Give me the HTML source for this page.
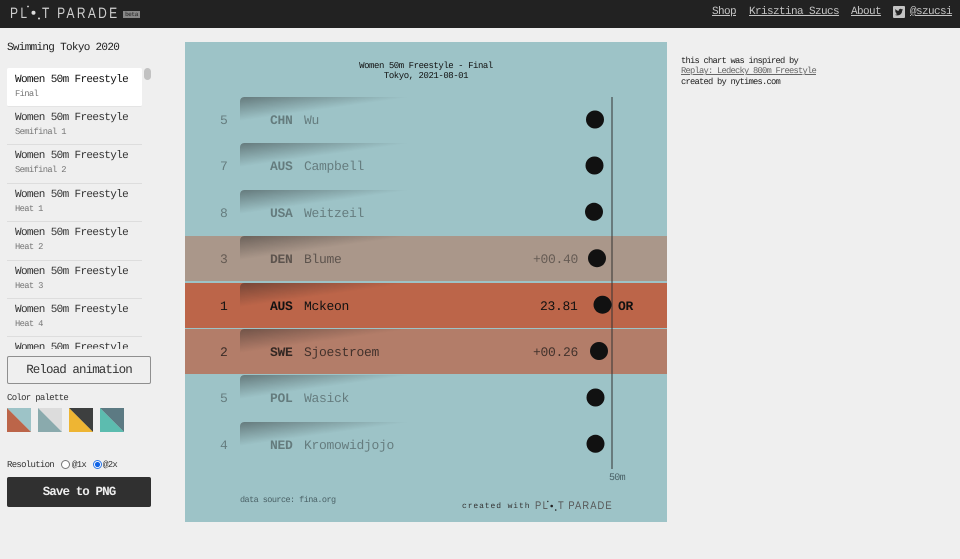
<!DOCTYPE html>
<html><head><meta charset="utf-8">
<style>
html,body{margin:0;padding:0;width:960px;height:559px;overflow:hidden;background:#efefef;font-family:"Liberation Mono",monospace;color:#222;text-rendering:geometricPrecision}
.a{position:absolute;white-space:pre;line-height:1}
#hdr{position:absolute;left:0;top:0;width:960px;height:28px;background:#222}
.nav{color:#c4c4c4;font-size:11px;text-decoration:underline;top:7px;letter-spacing:-.6px}
.logo{font-family:"Liberation Sans",sans-serif;color:#d0d0d0;font-size:15px;letter-spacing:2.9px;top:6px;transform:scaleX(.8);transform-origin:0 0}
.it{position:absolute;left:7px;width:135px;height:38px;border-bottom:1px solid #ddd}
.it b{position:absolute;left:8px;top:5.5px;font-weight:normal;font-size:11px;color:#333;letter-spacing:-.65px;white-space:pre;line-height:12px}
.it i{position:absolute;left:8px;top:20.5px;font-style:normal;font-size:8.8px;color:#777;letter-spacing:-.65px;white-space:pre;line-height:10px}
.r{font-size:13px;letter-spacing:-.3px;color:#111}
.c{font-weight:bold}
.w{position:absolute;left:240px;width:170px;height:24px;-webkit-mask-image:linear-gradient(to right,#000,transparent);mask-image:linear-gradient(to right,#000,transparent);border-top-left-radius:4px;background:conic-gradient(from 262deg at 170px 0,rgba(34,34,34,0) 0deg,rgba(34,34,34,.45) 8deg,rgba(34,34,34,0) 8deg)}
.s{font-size:9px;color:#333;letter-spacing:-.7px}
</style></head><body>
<div id="hdr"></div>
<div class="a logo" style="left:10px">PL</div>
<div class="a logo" style="left:42px">T PARADE</div>
<svg class="a" style="left:0;top:0" width="150" height="28"><circle cx="28" cy="6.500" r=".9" fill="#ddd"/><circle cx="33.500" cy="12.700" r="2" fill="#ddd"/><circle cx="39" cy="18.500" r="1" fill="#ddd"/></svg>
<div class="a" style="left:123px;top:11px;width:17px;height:7px;background:#888;color:#222;font-size:6px;line-height:7px;text-align:center;letter-spacing:-.4px">beta</div>
<div class="a nav" style="left:712px">Shop</div>
<div class="a nav" style="left:749px">Krisztina Szucs</div>
<div class="a nav" style="left:851px">About</div>
<svg class="a" style="left:893px;top:6px" width="12" height="12" viewBox="0 0 12 12"><rect width="12" height="12" rx="1" fill="#c4c4c4"/><path d="M10 3.6c-.3.1-.6.2-1 .2.4-.2.6-.5.8-.9-.3.2-.7.3-1.100.4a1.700 1.700 0 0 0-2.900 1.500C4.400 4.800 3.200 4.100 2.400 3.100c-.4.800-.2 1.700.5 2.200-.3 0-.5-.1-.7-.2 0 .8.600 1.500 1.300 1.700-.2.100-.5.100-.7 0 .2.700.9 1.100 1.600 1.200-.7.500-1.500.8-2.400.7.800.5 1.600.7 2.500.7 3 0 4.700-2.500 4.600-4.800.3-.2.600-.5.9-.6z" fill="#222"/></svg>
<div class="a nav" style="left:910px">@szucsi</div>

<div class="a" style="left:7px;top:43px;font-size:11px;letter-spacing:-.7px;color:#222">Swimming Tokyo 2020</div>

<div style="position:absolute;left:0;top:68px;width:152px;height:281px;overflow:hidden">
<div class="it" style="top:0;background:#fff;border-radius:2px;border-bottom:1px solid #e4e4e4"><b style="color:#111">Women 50m Freestyle</b><i>Final</i></div>
<div class="it" style="top:38.400px"><b>Women 50m Freestyle</b><i>Semifinal 1</i></div>
<div class="it" style="top:76.800px"><b>Women 50m Freestyle</b><i>Semifinal 2</i></div>
<div class="it" style="top:115.200px"><b>Women 50m Freestyle</b><i>Heat 1</i></div>
<div class="it" style="top:153.600px"><b>Women 50m Freestyle</b><i>Heat 2</i></div>
<div class="it" style="top:192px"><b>Women 50m Freestyle</b><i>Heat 3</i></div>
<div class="it" style="top:230.400px"><b>Women 50m Freestyle</b><i>Heat 4</i></div>
<div class="it" style="top:268.800px"><b>Women 50m Freestyle</b></div>
<div style="position:absolute;left:144px;top:0;width:7px;height:12px;border-radius:4px;background:#c2c2c2"></div>
</div>

<div class="a" style="left:7px;top:356px;width:142px;height:26px;border:1px solid #8f8f8f;border-radius:2px;text-align:center;line-height:26px;font-size:12.500px;letter-spacing:-.9px;color:#333">Reload animation</div>
<div class="a s" style="left:7px;top:394px">Color palette</div>
<svg class="a" style="left:7px;top:408px" width="120" height="25">
<polygon points="0,0 24,0 24,24" fill="#9dc3c7"/><polygon points="0,0 24,24 0,24" fill="#bc6549"/>
<polygon points="31,0 55,0 55,24" fill="#dcdcdc"/><polygon points="31,0 55,24 31,24" fill="#8aaaad"/>
<polygon points="62,0 86,0 86,24" fill="#3d3f3f"/><polygon points="62,0 86,24 62,24" fill="#eeb533"/>
<polygon points="93,0 117,0 117,24" fill="#5c7a83"/><polygon points="93,0 117,24 93,24" fill="#5cbcaf"/>
</svg>
<div class="a s" style="left:7px;top:461px">Resolution</div>
<svg class="a" style="left:60px;top:458px" width="50" height="14"><circle cx="5.500" cy="6.500" r="4" fill="#fff" stroke="#777" stroke-width="1"/><circle cx="37.500" cy="6.500" r="4" fill="#fff" stroke="#2a76e8" stroke-width="1"/><circle cx="37.500" cy="6.500" r="2.600" fill="#0f62e6"/></svg>
<div class="a s" style="left:72px;top:461px">@1x</div>
<div class="a s" style="left:103px;top:461px">@2x</div>
<div class="a" style="left:7px;top:477px;width:144px;height:30px;background:#303030;border-radius:2px;text-align:center;line-height:30px;font-size:12.500px;letter-spacing:-.9px;color:#eee;font-weight:bold">Save to PNG</div>

<div style="position:absolute;left:185px;top:42px;width:482px;height:480px;background:#9dc3c7"></div>
<div class="a" style="left:185px;top:236px;width:482px;height:45px;background:#aa978a"></div>
<div class="a" style="left:185px;top:282.500px;width:482px;height:45px;background:#bc6549"></div>
<div class="a" style="left:185px;top:329px;width:482px;height:45px;background:#b37d69"></div>

<div class="w" style="top:97px"></div>
<div class="w" style="top:143.400px"></div>
<div class="w" style="top:189.800px"></div>
<div class="w" style="top:236.200px"></div>
<div class="w" style="top:282.600px"></div>
<div class="w" style="top:329px"></div>
<div class="w" style="top:375.400px"></div>
<div class="w" style="top:421.800px"></div>

<svg class="a" style="left:185px;top:42px" width="482" height="480">
<g fill="#111"><circle cx="410" cy="77.500" r="9"/><circle cx="409.500" cy="123.500" r="9"/><circle cx="409" cy="169.800" r="9"/><circle cx="412" cy="216.200" r="9"/><circle cx="417.500" cy="262.700" r="9"/><circle cx="414" cy="309" r="9"/><circle cx="410.500" cy="355.500" r="9"/><circle cx="410.500" cy="401.800" r="9"/></g>
<rect x="426.500" y="55" width="1" height="372" fill="#333"/>
</svg>

<div class="a" style="left:185px;top:61px;width:482px;text-align:center;font-size:9px;line-height:10.300px;color:#111;letter-spacing:-.45px">Women 50m Freestyle - Final<br>Tokyo, 2021-08-01</div>

<!-- rows -->
<div class="a r" style="left:220px;top:114px;opacity:.4">5</div><div class="a r c" style="left:270px;top:114px;opacity:.4">CHN</div><div class="a r" style="left:304px;top:114px;opacity:.4">Wu</div>
<div class="a r" style="left:220px;top:160px;opacity:.4">7</div><div class="a r c" style="left:270px;top:160px;opacity:.4">AUS</div><div class="a r" style="left:304px;top:160px;opacity:.4">Campbell</div>
<div class="a r" style="left:220px;top:207px;opacity:.4">8</div><div class="a r c" style="left:270px;top:207px;opacity:.4">USA</div><div class="a r" style="left:304px;top:207px;opacity:.4">Weitzeil</div>
<div class="a r" style="left:220px;top:253px;opacity:.45">3</div><div class="a r c" style="left:270px;top:253px;opacity:.5">DEN</div><div class="a r" style="left:304px;top:253px;opacity:.5">Blume</div><div class="a r" style="left:533px;top:253px;opacity:.45">+00.40</div>
<div class="a r" style="left:220px;top:300px">1</div><div class="a r c" style="left:270px;top:300px">AUS</div><div class="a r" style="left:304px;top:300px">Mckeon</div><div class="a r" style="left:540px;top:300px">23.81</div><div class="a r c" style="left:618px;top:300px">OR</div>
<div class="a r" style="left:220px;top:346px;opacity:.75">2</div><div class="a r c" style="left:270px;top:346px;opacity:.8">SWE</div><div class="a r" style="left:304px;top:346px;opacity:.7">Sjoestroem</div><div class="a r" style="left:533px;top:346px;opacity:.7">+00.26</div>
<div class="a r" style="left:220px;top:392px;opacity:.4">5</div><div class="a r c" style="left:270px;top:392px;opacity:.4">POL</div><div class="a r" style="left:304px;top:392px;opacity:.4">Wasick</div>
<div class="a r" style="left:220px;top:439px;opacity:.4">4</div><div class="a r c" style="left:270px;top:439px;opacity:.4">NED</div><div class="a r" style="left:304px;top:439px;opacity:.4">Kromowidjojo</div>

<div class="a" style="left:609px;top:474px;font-size:10px;color:#4a6166;letter-spacing:-.7px">50m</div>
<div class="a" style="left:240px;top:496px;font-size:8.500px;color:#4a6166;letter-spacing:-.55px">data source: fina.org</div>
<div class="a" style="left:462px;top:503px;font-size:8px;color:#333;letter-spacing:.9px">created with</div>
<div class="a" style="left:535px;top:501px;font-family:'Liberation Sans',sans-serif;font-size:11px;color:#555;letter-spacing:1.600px;transform:scaleX(.85);transform-origin:0 0">PL</div>
<div class="a" style="left:558px;top:501px;font-family:'Liberation Sans',sans-serif;font-size:11px;color:#555;letter-spacing:1.300px;transform:scaleX(.85);transform-origin:0 0">T PARADE</div>
<svg class="a" style="left:530px;top:498px" width="32" height="16"><circle cx="17.800" cy="3.500" r=".7" fill="#222"/><circle cx="21.700" cy="8" r="1.300" fill="#222"/><circle cx="25.700" cy="12" r=".8" fill="#222"/></svg>

<div class="a" style="left:681px;top:56px;font-size:8.800px;line-height:10.300px;color:#222;letter-spacing:-.78px">this chart was inspired by<br><span style="color:#666;text-decoration:underline">Replay: Ledecky 800m Freestyle</span><br>created by nytimes.com</div>
</body></html>
